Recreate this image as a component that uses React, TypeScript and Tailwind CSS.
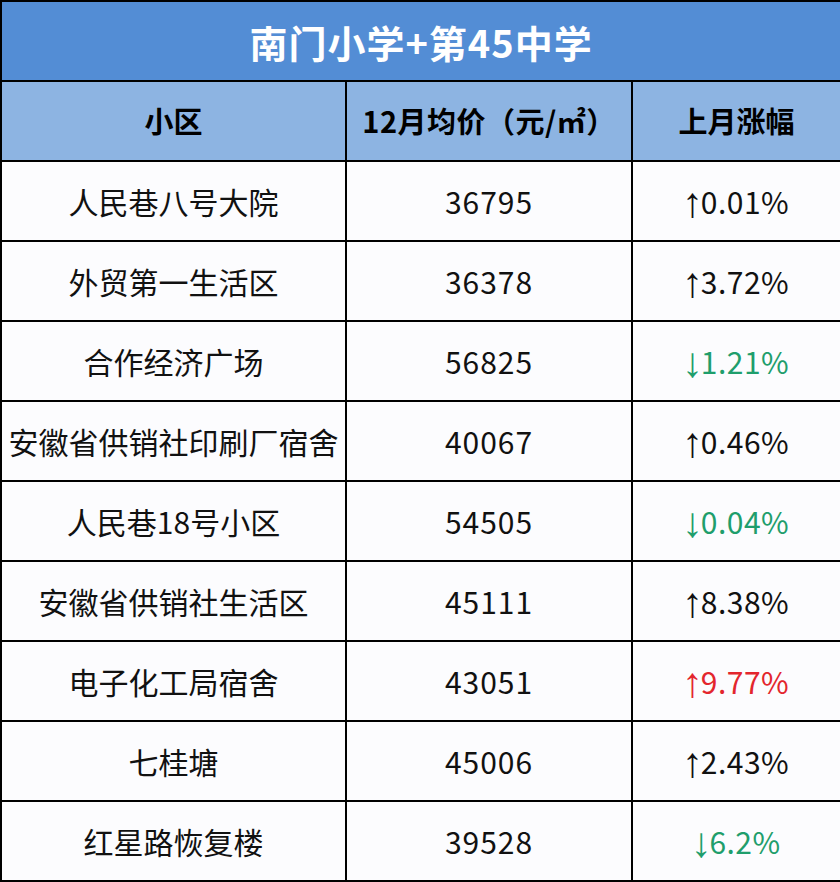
import React from "react";

type Row = { name: string; price: string; dir: "↑" | "↓"; value: string; tone: "up" | "down" | "hot" };

const rows: Row[] = [
  { name: "人民巷八号大院", price: "36795", dir: "↑", value: "0.01%", tone: "up" },
  { name: "外贸第一生活区", price: "36378", dir: "↑", value: "3.72%", tone: "up" },
  { name: "合作经济广场", price: "56825", dir: "↓", value: "1.21%", tone: "down" },
  { name: "安徽省供销社印刷厂宿舍", price: "40067", dir: "↑", value: "0.46%", tone: "up" },
  { name: "人民巷18号小区", price: "54505", dir: "↓", value: "0.04%", tone: "down" },
  { name: "安徽省供销社生活区", price: "45111", dir: "↑", value: "8.38%", tone: "up" },
  { name: "电子化工局宿舍", price: "43051", dir: "↑", value: "9.77%", tone: "hot" },
  { name: "七桂塘", price: "45006", dir: "↑", value: "2.43%", tone: "up" },
  { name: "红星路恢复楼", price: "39528", dir: "↓", value: "6.2%", tone: "down" },
];

const toneClass = {
  up: "text-[#111]",
  down: "text-[#1f9e6c]",
  hot: "text-[#e3262d]",
};

const font = { fontFamily: '"Noto Sans CJK SC", "Noto Sans", sans-serif' };
const arrowFont = { fontFamily: '"Liberation Sans", "DejaVu Sans", sans-serif' };

export default function App() {
  return (
    <div className="w-[840px] h-[882px] bg-white" style={font}>
      <table className="w-[840px] table-fixed border-collapse border-2 border-black">
        <colgroup>
          <col className="w-[345px]" />
          <col className="w-[286px]" />
          <col className="w-[209px]" />
        </colgroup>
        <thead>
          <tr className="h-[80px] bg-[#538dd5]">
            <th colSpan={3} className="border-2 border-black text-center text-[38px] font-bold text-white tracking-[1px]">
              南门小学+第45中学
            </th>
          </tr>
          <tr className="h-[80px] bg-[#8db4e2]">
            <th className="border-2 border-black text-center text-[29px] font-bold text-black">小区</th>
            <th className="border-2 border-black text-center text-[29px] font-bold text-black tracking-[0.5px]">12月均价（元/㎡）</th>
            <th className="border-2 border-black text-center text-[29px] font-bold text-black">上月涨幅</th>
          </tr>
        </thead>
        <tbody>
          {rows.map((r) => (
            <tr key={r.name} className="h-[80px] bg-[#fcfcfe]">
              <td className="border-2 border-black text-center text-[30px] text-[#111] whitespace-nowrap">{r.name}</td>
              <td className="border-2 border-black text-center text-[30px] text-[#111] tracking-[1px]">{r.price}</td>
              <td className={`border-2 border-black text-center text-[30px] tracking-[0.5px] ${toneClass[r.tone]}`}>
                <span style={arrowFont} className="inline-block text-[42px] leading-none translate-y-[3px] -mr-[2px] -ml-[2px] tracking-normal">
                  {r.dir}
                </span>
                {r.value}
              </td>
            </tr>
          ))}
        </tbody>
      </table>
    </div>
  );
}
